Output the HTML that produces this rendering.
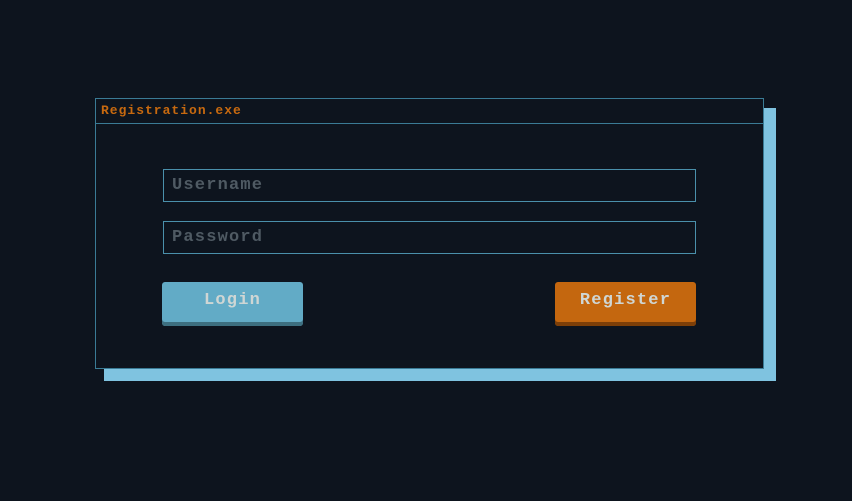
<!DOCTYPE html>
<html><head><style>
*{margin:0;padding:0;box-sizing:border-box}
body{width:852px;height:501px;background:#0d141e;position:relative;overflow:hidden;font-family:"Liberation Mono",monospace;font-weight:bold}
.sh{position:absolute;left:104px;top:108px;width:672px;height:273px;background:#7fc3e0}
.win{position:absolute;left:95px;top:98px;width:669px;height:271px;background:#0d141e;border:1px solid #3a7b95}
.title{height:25px;border-bottom:1px solid #3a7b95;color:#c7690f;font-size:13px;letter-spacing:1px;padding:4px 0 0 5px}
.inp{position:absolute;left:67px;width:533px;height:33px;border:1px solid #4a90ab;color:#4f5a63;font-size:17px;letter-spacing:1.2px;padding:6px 0 0 8px}
.btn{position:absolute;top:183px;width:141px;height:44px;border-radius:3px;color:#cfd6d4;font-size:17px;letter-spacing:1.2px;text-align:center;padding-top:9px}
</style></head><body>
<div class="sh"></div>
<div class="win">
<div class="title">Registration.exe</div>
<div class="inp" style="top:70px">Username</div>
<div class="inp" style="top:122px">Password</div>
<div class="btn" style="left:66px;background:#62abc6;box-shadow:inset 0 -4px 0 #3d6f80">Login</div>
<div class="btn" style="left:459px;background:#c4670f;box-shadow:inset 0 -4px 0 #7d3f08">Register</div>
</div>
</body></html>
